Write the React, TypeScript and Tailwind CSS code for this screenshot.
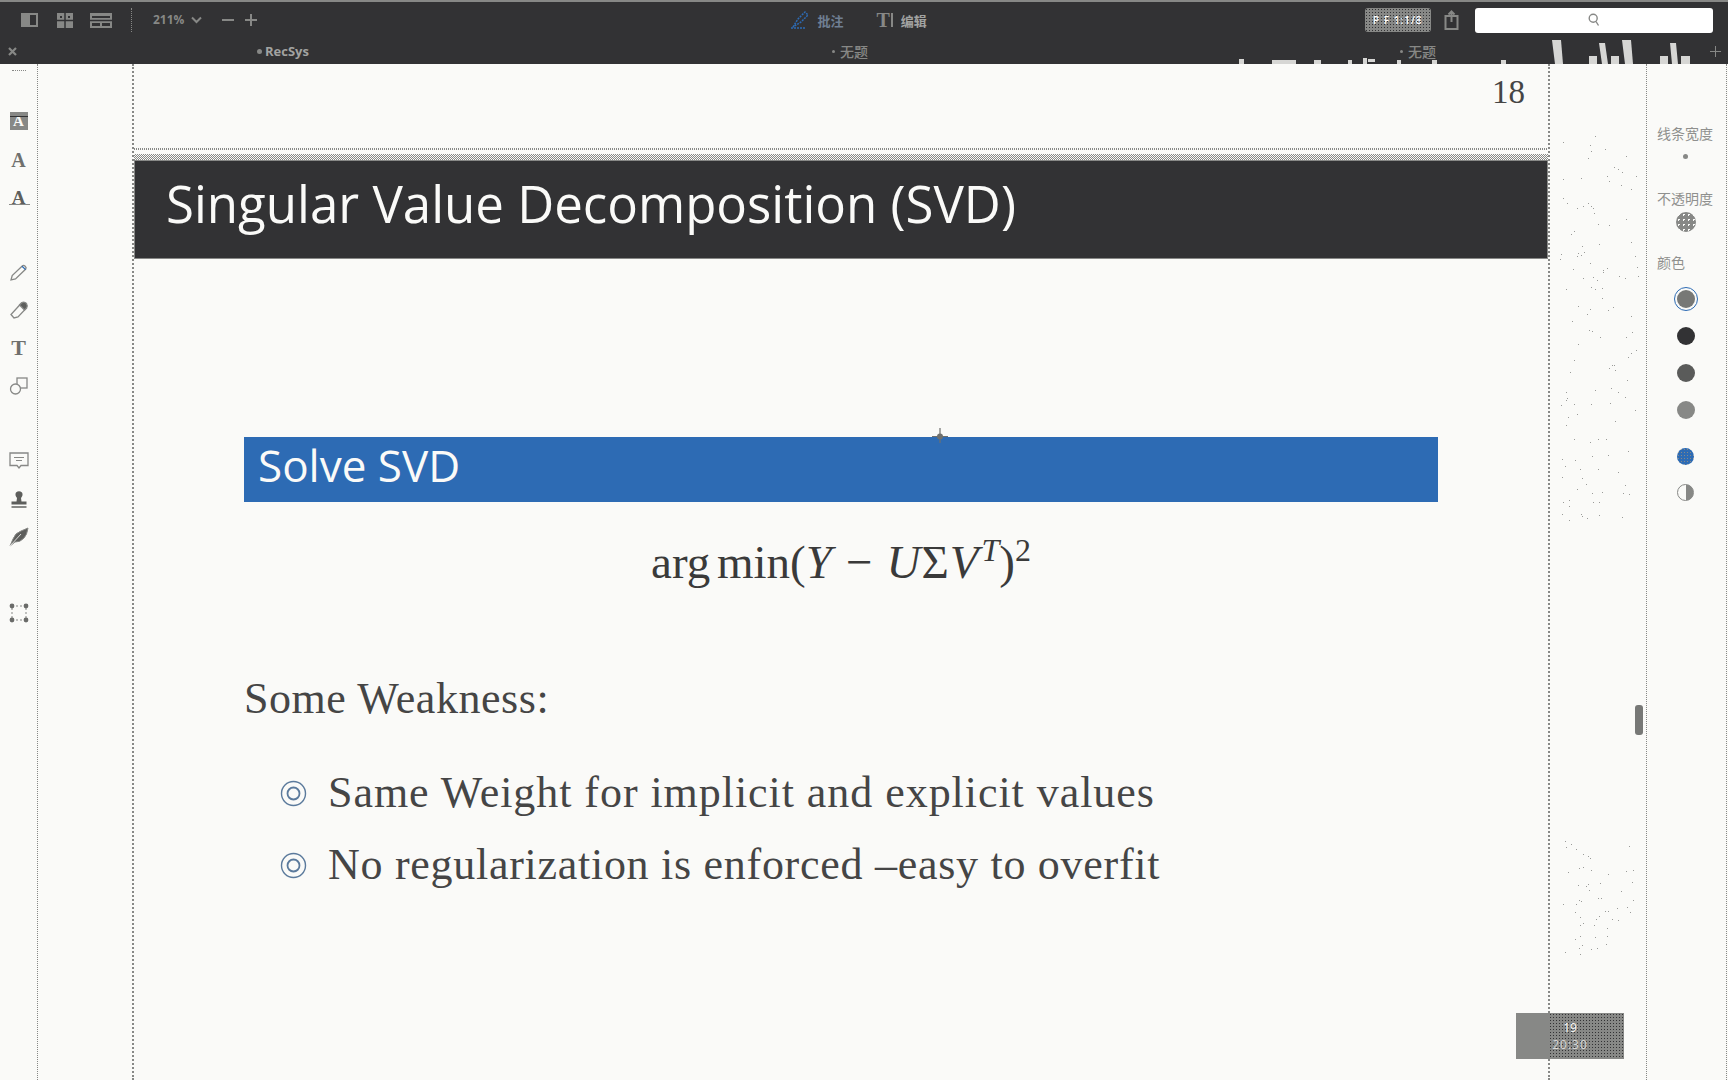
import React from "react";

const CJK = "font-['Noto_Sans_CJK_SC','Noto_Sans',sans-serif]";
const SERIF = "font-['Liberation_Serif',serif]";
const SANS = "font-['Open_Sans',sans-serif]";
const G = "#878886";

const speck = (n: number, seed: number, x0: number, y0: number, w: number, h: number) => {
  const out: [number, number][] = [];
  let s = seed;
  for (let i = 0; i < n; i++) {
    s = (s * 9301 + 49297) % 233280;
    const a = s / 233280;
    s = (s * 9301 + 49297) % 233280;
    const b = s / 233280;
    out.push([Math.round(x0 + a * w), Math.round(y0 + b * h)]);
  }
  return out;
};

function Stroke({ children, size = 20 }: { children: React.ReactNode; size?: number }) {
  return (
    <svg width={size} height={size} viewBox="0 0 20 20" fill="none" stroke={G} strokeWidth="1.3">
      {children}
    </svg>
  );
}

function ToolBtn({ mt, children }: { mt: string; children: React.ReactNode }) {
  return <div className={`flex h-5 w-full items-center justify-center ${mt}`}>{children}</div>;
}

function LeftTools() {
  return (
    <div className="flex w-[38px] shrink-0 flex-col items-center border-r border-dotted border-[#878886] pt-[6px]">
      <div className="h-[4px] w-[14px] border-t border-dotted border-[#878886]" />
      <ToolBtn mt="mt-[37px]">
        <div className="relative flex h-[18px] w-[18px] items-center justify-center bg-[#878886]">
          <span className={`${SERIF} text-[15px] font-bold leading-none text-[#fafaf8]`}>A</span>
          <div className="absolute left-0 top-[4px] h-px w-full bg-[#323234]" />
        </div>
      </ToolBtn>
      <ToolBtn mt="mt-[19px]">
        <span className={`${SERIF} text-[20px] font-bold leading-none text-[#6f706e]`}>A</span>
      </ToolBtn>
      <ToolBtn mt="mt-[18px]">
        <div className="relative">
          <span className={`${SERIF} text-[19px] font-bold leading-none text-[#5d5e5c]`}>A</span>
          <div className="absolute bottom-[5px] left-[-3px] h-px w-[21px] bg-[#878886]" />
        </div>
      </ToolBtn>
      <ToolBtn mt="mt-[55px]">
        <Stroke>
          <path d="M2 17 L3.2 12.5 L13.5 2.8 C15 1.6 18 4.2 16.8 6 L6.5 16 Z" />
          <path d="M13 3.2 L16.6 6.6" stroke="#2d6bb4" />
        </Stroke>
      </ToolBtn>
      <ToolBtn mt="mt-[17px]">
        <Stroke>
          <path d="M2 14.5 L5 18 L9 17 L17.5 8 L12.5 3 Z" />
          <path d="M10.5 5 L12.5 3 Q15 1 17.5 3.5 Q19 6 17.5 8 L15.5 10 Z" fill="#5d5e5c" />
        </Stroke>
      </ToolBtn>
      <ToolBtn mt="mt-[18px]">
        <span className={`${SERIF} text-[22px] font-bold leading-none text-[#6f706e]`}>T</span>
      </ToolBtn>
      <ToolBtn mt="mt-[18px]">
        <Stroke>
          <rect x="8" y="2" width="10" height="10" />
          <circle cx="6.5" cy="13" r="5" fill="#fafaf8" />
        </Stroke>
      </ToolBtn>
      <ToolBtn mt="mt-[54px]">
        <Stroke>
          <path d="M1 3 H19 V15.5 H12 L10 18 L8 15.5 H1 Z" />
          <path d="M5 7.5 H15 M7 10.5 H13" strokeWidth="1" />
        </Stroke>
      </ToolBtn>
      <ToolBtn mt="mt-[20px]">
        <svg width="20" height="20" viewBox="0 0 20 20" fill={G}>
          <path d="M7 2.5 Q10 0 13 2.5 Q14.5 5 12 8 L12.5 11.5 H17.5 V14.5 H2.5 V11.5 H7.5 L8 8 Q5.5 5 7 2.5 Z" fill="#5d5e5c" />
          <rect x="2.5" y="16" width="15" height="2" />
        </svg>
      </ToolBtn>
      <ToolBtn mt="mt-[17px]">
        <svg width="20" height="20" viewBox="0 0 20 20" fill="#5d5e5c" stroke={G} strokeWidth="1">
          <path d="M1 19 L4 12 Q6 6 12 4 L19 1 Q18 8 15 11 Q11 15.5 6 15 Z" />
          <path d="M1 19 L12 7" stroke="#fafaf8" strokeWidth="0.8" />
        </svg>
      </ToolBtn>
      <ToolBtn mt="mt-[56px]">
        <svg width="20" height="20" viewBox="0 0 20 20" fill="none">
          <rect x="3" y="3" width="14" height="14" stroke={G} strokeDasharray="2 2" />
          <g fill="#6a6b69">
            <circle cx="3" cy="3" r="2.4" />
            <circle cx="17" cy="3" r="2.4" />
            <circle cx="3" cy="17" r="2.4" />
            <circle cx="17" cy="17" r="2.4" />
          </g>
        </svg>
      </ToolBtn>
    </div>
  );
}

function TopBar() {
  return (
    <div className="relative h-16 w-full shrink-0 border-t-2 border-[#878886] bg-[#323234]">
      <div className="relative flex h-[36px] items-center">
        <div className="ml-[21px] flex items-center">
          <svg width="17" height="14" viewBox="0 0 17 14">
            <rect width="17" height="14" fill={G} />
            <rect x="9" y="2" width="6" height="10" fill="#323234" />
          </svg>
          <svg className="ml-[19px]" width="16" height="15" viewBox="0 0 16 15">
            <rect width="16" height="15" fill={G} />
            <path d="M8 0 V15 M0 7.5 H16" stroke="#323234" strokeWidth="1.5" />
            <rect x="3" y="3" width="2" height="2" fill="#323234" />
            <rect x="11" y="3" width="2" height="2" fill="#323234" />
          </svg>
          <svg className="ml-[17px]" width="22" height="15" viewBox="0 0 22 15">
            <rect width="22" height="15" fill={G} />
            <path d="M0 7.5 H22" stroke="#323234" strokeWidth="1.5" />
            <rect x="2" y="3" width="18" height="2" fill="#323234" />
            <rect x="2" y="10" width="8" height="3" fill="#323234" />
            <rect x="12" y="10" width="8" height="3" fill="#323234" />
          </svg>
        </div>
        <div className="ml-[19px] h-6 border-l border-dotted border-[#878886]" />
        <span className={`ml-[21px] ${SANS} text-[12px] font-bold leading-none text-[#878886]`}>211%</span>
        <svg className="ml-[7px]" width="11" height="8" viewBox="0 0 11 8" fill="none" stroke={G} strokeWidth="2">
          <path d="M1 1.5 L5.5 6 L10 1.5" />
        </svg>
        <div className="ml-[20px] h-[2px] w-[12px] bg-[#878886]" />
        <div className="relative ml-[11px] h-[12px] w-[12px]">
          <div className="absolute left-0 top-[5px] h-[2px] w-[12px] bg-[#878886]" />
          <div className="absolute left-[5px] top-0 h-[12px] w-[2px] bg-[#878886]" />
        </div>

        <svg className="ml-[533px]" width="22" height="20" viewBox="0 0 22 20" fill="none" stroke="#2d6bb4" strokeWidth="1.5" strokeDasharray="2 1">
          <path d="M3 17 L8 9 L15 2 L18 5 L11 12 Z" />
          <path d="M1 18 H16" />
        </svg>
        <span className={`ml-[5px] ${CJK} text-[13px] font-bold leading-none text-[#6f7f93]`}>批注</span>
        <span className={`ml-[33px] ${SERIF} text-[20px] font-bold leading-none text-[#878886]`}>T</span>
        <div className="ml-[1px] h-[14px] w-[2px] bg-[#878886]" />
        <span className={`ml-[8px] ${CJK} text-[13px] font-bold leading-none text-[#a2a3a1]`}>编辑</span>

        <div className="relative ml-[438px] flex h-[24px] w-[66px] items-center justify-center overflow-hidden rounded-[3px] bg-[#878886]">
          <span className={`${SANS} text-[10px] font-semibold leading-none tracking-[1px] text-white`}>P F 1:1/8</span>
          <div className="absolute inset-0 bg-[radial-gradient(#323234_0.6px,transparent_0.6px)] bg-[length:3px_3px]" />
        </div>
        <svg className="ml-[13px]" width="15" height="20" viewBox="0 0 15 20" fill="none" stroke={G} strokeWidth="2">
          <rect x="1.5" y="6" width="12" height="13" />
          <path d="M7.5 12 V2 M4.5 4.5 L7.5 1.5 L10.5 4.5" />
        </svg>
        <div className="ml-[16px] flex h-[25px] w-[238px] items-center justify-center rounded-[3px] bg-white">
          <svg width="12" height="14" viewBox="0 0 12 14" fill="none" stroke={G} strokeWidth="1.4">
            <circle cx="5.2" cy="5.2" r="4" />
            <path d="M8 8.5 L10.5 12.5" />
          </svg>
        </div>
      </div>
      <div className="relative flex h-[26px] items-center">
        <svg className="ml-[8px]" width="9" height="9" viewBox="0 0 9 9" stroke={G} strokeWidth="2.2">
          <path d="M1 1 L8 8 M8 1 L1 8" />
        </svg>
        <div className="ml-[240px] h-[5px] w-[5px] rounded-full bg-[#878886]" />
        <span className={`ml-[3px] ${SANS} text-[13px] font-bold leading-none text-[#a2a3a1]`}>RecSys</span>
        <div className="ml-[523px] h-[3px] w-[3px] rounded-full bg-[#878886]" />
        <span className={`ml-[5px] ${CJK} text-[14px] font-medium leading-none text-[#878886]`}>无题</span>
        <div className="ml-[532px] h-[3px] w-[3px] rounded-full bg-[#878886]" />
        <span className={`ml-[5px] ${CJK} text-[14px] font-medium leading-none text-[#878886]`}>无题</span>
        <div className="relative ml-[274px] h-[11px] w-[11px]">
          <div className="absolute left-0 top-[5px] h-px w-[11px] bg-[#878886]" />
          <div className="absolute left-[5px] top-0 h-[11px] w-px bg-[#878886]" />
        </div>
      </div>
      <svg className="pointer-events-none absolute left-0 top-[-2px]" width="1728" height="64" viewBox="0 0 1728 64" fill="#d6d6d4">
        <path d="M1552 40 H1561 L1563 64 H1555 Z" />
        <path d="M1622 40 H1631 L1633 64 H1625 Z" />
        <path d="M1589 56 H1597 V64 H1589 Z M1599 43 H1605 L1608 64 H1602 Z M1611 56 H1619 V64 H1611 Z" />
        <path d="M1660 56 H1668 V64 H1660 Z M1670 43 H1676 L1678 64 H1672 Z M1681 56 H1690 V64 H1681 Z" />
        <path d="M1239 59 H1244 V64 H1239 Z M1272 60 H1296 V64 H1272 Z M1314 60 H1321 V64 H1314 Z M1348 60 H1352 V64 H1348 Z M1363 58 H1367 V64 H1363 Z M1368 59 H1375 V62 H1368 Z M1397 60 H1401 V64 H1397 Z M1432 60 H1437 V64 H1432 Z M1501 60 H1506 V64 H1501 Z" />
      </svg>
    </div>
  );
}

function Bullet({ children, mt, track }: { children: React.ReactNode; mt: string; track: string }) {
  return (
    <div className={`flex items-center ${mt}`}>
      <svg className="ml-[36px] shrink-0" width="27" height="27" viewBox="0 0 27 27" fill="none" stroke="#5b7a9c">
        <circle cx="13.5" cy="13.5" r="12" strokeWidth="1.4" />
        <circle cx="13.5" cy="13.5" r="6" strokeWidth="1.8" />
      </svg>
      <span className={`ml-[21px] whitespace-nowrap ${SERIF} text-[44px] leading-[48px] ${track} text-[#454545]`}>{children}</span>
    </div>
  );
}

function Slide() {
  return (
    <div className="flex min-w-0 flex-1 flex-col">
      <div className="flex h-[84px] shrink-0 justify-end pr-[23px] pt-[9px]">
        <span className={`${SERIF} text-[33px] leading-[38px] text-[#454545]`}>18</span>
      </div>
      <div className="h-[2px] shrink-0 bg-[repeating-linear-gradient(90deg,#878886_0_1px,#fafaf8_1px_2px)]" />
      <div className="h-[4px] shrink-0" />
      <div className="h-[6px] shrink-0 bg-[repeating-conic-gradient(#878886_0_25%,#fafaf8_0_50%)] bg-[length:2px_2px]" />
      <div className="flex h-[99px] shrink-0 items-start border border-[#878886] bg-[#323234] pl-[31px] pt-[8px]">
        <span className={`${SANS} whitespace-nowrap text-[51px] leading-[68px] text-[#fafaf8]`}>
          Singular Value Decomposition (SVD)
        </span>
      </div>
      <div className="flex flex-col px-[110px]">
        <div className="mt-[178px] flex h-[65px] items-start bg-[#2d6bb4] pl-[14px]">
          <span className={`${SANS} text-[44px] leading-[56px] text-[#fafaf8]`}>Solve SVD</span>
        </div>
        <div className={`mt-[27px] flex h-[66px] items-baseline justify-center ${SERIF} text-[47px] leading-[66px] text-[#3a3a3a]`}>
          <span className="whitespace-pre [word-spacing:-5px]">arg min(</span>
          <span className="italic">Y</span>
          <span className="mx-[14px]">−</span>
          <span className="italic">U</span>
          <span className="mx-[1px]">Σ</span>
          <span className="italic">V</span>
          <span className="relative top-[-17px] ml-[3px] text-[32px] italic">T</span>
          <span>)</span>
          <span className="relative top-[-17px] text-[32px]">2</span>
        </div>
        <div className={`mt-[80px] ${SERIF} whitespace-nowrap text-[44px] leading-[48px] tracking-[0.55px] text-[#454545]`}>Some Weakness:</div>
        <Bullet mt="mt-[46px]" track="tracking-[0.95px]">Same Weight for implicit and explicit values</Bullet>
        <Bullet mt="mt-[24px]" track="tracking-[0.72px]">No regularization is enforced –easy to overfit</Bullet>
      </div>
    </div>
  );
}

function Dot({ cls }: { cls: string }) {
  return <div className={cls} />;
}

function RightPanel() {
  return (
    <div className="flex w-[81px] shrink-0 flex-col border-l border-r border-dotted border-[#878886] pt-[60px]">
      <span className={`ml-[10px] ${CJK} text-[14px] leading-[18px] text-[#8f908e]`}>线条宽度</span>
      <div className="mt-[12px] flex justify-center pr-[2px]">
        <Dot cls="h-[5px] w-[5px] rounded-full bg-[#878886]" />
      </div>
      <span className={`ml-[10px] mt-[30px] ${CJK} text-[14px] leading-[18px] text-[#8f908e]`}>不透明度</span>
      <div className="mt-[5px] flex justify-center pr-[2px]">
        <Dot cls="h-[20px] w-[20px] rounded-full bg-[#878886] bg-[radial-gradient(#fafaf8_1px,transparent_1px)] bg-[length:5px_5px]" />
      </div>
      <span className={`ml-[10px] mt-[21px] ${CJK} text-[14px] leading-[18px] text-[#8f908e]`}>颜色</span>
      <div className="flex flex-col items-center gap-[19px] pr-[2px] pt-[16px]">
        <div className="mb-[-3px] flex h-[24px] w-[24px] items-center justify-center rounded-full border border-[#2d6bb4]">
          <Dot cls="h-[18px] w-[18px] rounded-full bg-[#777876] bg-[radial-gradient(#323234_0.6px,transparent_0.6px)] bg-[length:2px_2px]" />
        </div>
        <Dot cls="h-[18px] w-[18px] rounded-full bg-[#323234]" />
        <Dot cls="h-[18px] w-[18px] rounded-full bg-[#5a5b5a]" />
        <Dot cls="h-[18px] w-[18px] rounded-full bg-[#878886]" />
        <Dot cls="mt-[10px] h-[17px] w-[17px] rounded-full bg-[#2d6bb4] bg-[radial-gradient(#878886_0.6px,transparent_0.6px)] bg-[length:3px_3px]" />
        <Dot cls="h-[17px] w-[17px] rounded-full border border-[#878886] bg-[linear-gradient(90deg,#fafaf8_50%,#878886_50%)]" />
      </div>
    </div>
  );
}

export default function App() {
  const dots = [
    ...speck(130, 17, 1560, 135, 78, 390),
    ...speck(55, 71, 1563, 840, 70, 115),
  ];
  return (
    <div className="relative flex h-[1080px] w-[1728px] flex-col overflow-hidden bg-[#fafaf8]">
      <TopBar />
      <div className="flex min-h-0 flex-1">
        <LeftTools />
        <div className="w-[94px] shrink-0" />
        <div className="flex w-[1418px] shrink-0 border-x-2 border-dotted border-[#878886]">
          <Slide />
        </div>
        <div className="w-[96px] shrink-0" />
        <RightPanel />
      </div>
      <svg className="pointer-events-none absolute left-0 top-0" width="1728" height="1080" fill="#9a9b99">
        {dots.map(([x, y], i) => (
          <rect key={i} x={x} y={y} width="1" height="1" />
        ))}
        <path d="M940 428 V443 M932 436.5 H948" stroke="#6f706e" strokeWidth="1.2" />
        <circle cx="940" cy="436.5" r="3" fill="#6f706e" />
      </svg>
      <div className="absolute left-[1635px] top-[705px] h-[30px] w-[8px] rounded-[3px] bg-[#777876]" />
      <div className="absolute left-[1516px] top-[1013px] flex h-[46px] w-[108px] flex-col items-center justify-center bg-[#878886]">
        <div className="absolute bottom-0 right-0 top-0 w-[75px] bg-[radial-gradient(#323234_0.6px,transparent_0.6px)] bg-[length:3px_3px]" />
        <span className={`relative ${SANS} text-[12px] leading-[17px] text-[#fafaf8]`}>19</span>
        <span className={`relative ${SANS} text-[12px] leading-[17px] tracking-[1px] text-[#d8d8d6]`}>20:30</span>
      </div>
    </div>
  );
}
